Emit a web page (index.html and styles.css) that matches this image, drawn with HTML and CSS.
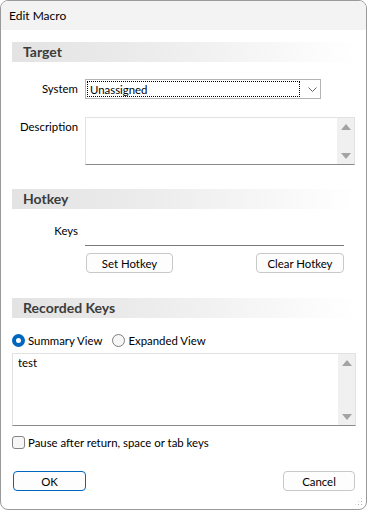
FILE: index.html
```html
<!DOCTYPE html>
<html lang="en">
<head>
  <meta charset="UTF-8" />
  <title>Edit Macro</title>
  <link rel="stylesheet" href="styles.css">
</head>
<body>
  <div class="window">
    <div class="titlebar">Edit Macro</div>

    <div class="content">
      <!-- Target -->
      <div class="section-head">Target</div>
      <div class="form-grid target-grid">
        <div class="label">System</div>
        <div class="select">
          <span class="select-value">Unassigned</span>
          <svg class="chevron" width="9" height="5" viewBox="0 0 9 5"><path d="M0.5 0.5 L4.5 4.5 L8.5 0.5" fill="none" stroke="#666" stroke-width="1"/></svg>
        </div>
        <div class="label">Description</div>
        <div class="textarea desc">
          <div class="ta-text"></div>
          <div class="scrollbar">
            <span class="arrow-up"></span>
            <span class="arrow-down"></span>
          </div>
        </div>
      </div>

      <!-- Hotkey -->
      <div class="section-head hotkey-head">Hotkey</div>
      <div class="form-grid keys-grid">
        <div class="label">Keys</div>
        <div class="keys-field"></div>
        <div></div>
        <div class="hotkey-buttons">
          <button class="btn btn-set">Set Hotkey</button>
          <button class="btn btn-clear">Clear Hotkey</button>
        </div>
      </div>

      <!-- Recorded keys -->
      <div class="section-head recorded-head">Recorded Keys</div>
      <div class="radio-row">
        <span class="radio checked"></span><span class="radio-label">Summary View</span>
        <span class="radio"></span><span class="radio-label">Expanded View</span>
      </div>
      <div class="textarea recorded">
        <div class="ta-text">test</div>
        <div class="scrollbar">
          <span class="arrow-up"></span>
          <span class="arrow-down"></span>
        </div>
      </div>
      <div class="check-row">
        <span class="checkbox"></span><span>Pause after return, space or tab keys</span>
      </div>

      <div class="dialog-buttons">
        <button class="btn btn-ok">OK</button>
        <button class="btn btn-cancel">Cancel</button>
      </div>
    </div>

    <div class="grip"></div>
  </div>
</body>
</html>
```

FILE: styles.css
```css
html, body {
  margin: 0;
  padding: 0;
  background: #fff;
}

body {
  font-family: Lato, "Liberation Sans", sans-serif;
  font-size: 11.4px;
  color: #000;
}

.window {
  position: relative;
  width: 367px;
  height: 510px;
  box-sizing: border-box;
  border: 1px solid #9a9a9a;
  border-radius: 8px;
  background: #fff;
  overflow: hidden;
}

.titlebar {
  height: 29px;
  line-height: 30px;
  padding-left: 8px;
  background: #f3f3f3;
  font-size: 12px;
}

.content {
  padding: 0 10px 0 11px;
}

.section-head {
  margin-top: 12px;
  height: 20px;
  line-height: 20px;
  padding-left: 11px;
  background: linear-gradient(to right, #e3e3e3, #ececec 40%, #fff);
  font-weight: bold;
  font-size: 14px;
  color: #3c3c3c;
}

.hotkey-head {
  margin-top: 24px;
}

.recorded-head {
  margin-top: 25px;
}

.form-grid {
  display: grid;
  grid-template-columns: 66px 1fr;
  column-gap: 7px;
}

.target-grid {
  margin-top: 17px;
  row-gap: 18px;
}

.label {
  text-align: right;
  line-height: 20px;
}

.select {
  width: 236px;
  height: 20px;
  box-sizing: border-box;
  border: 1px solid #b4b4b4;
  display: flex;
  align-items: center;
  padding: 1px;
}

.select-value {
  flex: none;
  width: 213px;
  height: 16px;
  line-height: 15px;
  box-sizing: border-box;
  border: 1px dotted #000;
  padding-left: 2px;
}

.chevron {
  margin-left: 8px;
}

.textarea {
  position: relative;
  box-sizing: border-box;
  border: 1px solid #e2e2e2;
  border-bottom-color: #8a8a8a;
  display: flex;
}

.desc {
  width: 270px;
  height: 48px;
}

.recorded {
  margin-top: 5px;
  width: 344px;
  height: 73px;
}

.ta-text {
  flex: 1;
  padding: 2px 5px;
}

.scrollbar {
  width: 17px;
  background: #f0f0f0;
  display: flex;
  flex-direction: column;
  justify-content: space-between;
  align-items: center;
  padding: 6px 0 5px;
}

.arrow-up {
  width: 0;
  height: 0;
  border-left: 5px solid transparent;
  border-right: 5px solid transparent;
  border-bottom: 6px solid #a3a3a3;
}

.arrow-down {
  width: 0;
  height: 0;
  border-left: 5px solid transparent;
  border-right: 5px solid transparent;
  border-top: 6px solid #a3a3a3;
}

.keys-grid {
  margin-top: 13px;
  row-gap: 7px;
}

.keys-grid .label {
  line-height: 18px;
}

.keys-field {
  width: 259px;
  height: 24px;
  box-sizing: border-box;
  border-bottom: 1px solid #7a7a7a;
}

.hotkey-buttons {
  width: 258px;
  margin-left: 1px;
  display: flex;
  justify-content: space-between;
}

.btn {
  height: 20px;
  box-sizing: border-box;
  border: 1px solid #c8c8c8;
  border-radius: 4px;
  background: #fdfdfd;
  font-family: inherit;
  font-size: 11.4px;
  color: #000;
  padding: 0;
}

.btn-set {
  width: 87px;
}

.btn-clear {
  width: 88px;
}

.radio-row {
  margin-top: 14px;
  height: 16px;
  display: flex;
  align-items: center;
}

.radio {
  width: 13px;
  height: 13px;
  box-sizing: border-box;
  border-radius: 50%;
  border: 1px solid #7d7d7d;
  background: #f6f6f6;
}

.radio.checked {
  border: 4px solid #0067c0;
  background: #fff;
}

.radio-label {
  margin-left: 3px;
  margin-right: 10px;
}

.check-row {
  margin-top: 9px;
  height: 15px;
  display: flex;
  align-items: center;
}

.checkbox {
  width: 13px;
  height: 13px;
  box-sizing: border-box;
  border: 1px solid #858585;
  border-radius: 3px;
  background: #f6f6f6;
  margin-right: 3px;
}

.dialog-buttons {
  margin-top: 21px;
  padding-left: 1px;
  padding-right: 1px;
  display: flex;
  justify-content: space-between;
}

.btn-ok {
  width: 73px;
  border-color: #0067c0;
}

.btn-cancel {
  width: 72px;
}

.grip {
  position: absolute;
  right: 3px;
  bottom: 3px;
  width: 9px;
  height: 9px;
  background:
    radial-gradient(circle, #b0b0b0 0.8px, transparent 1px) 0 0 / 3px 3px;
  clip-path: polygon(100% 0, 100% 100%, 0 100%);
}
```
